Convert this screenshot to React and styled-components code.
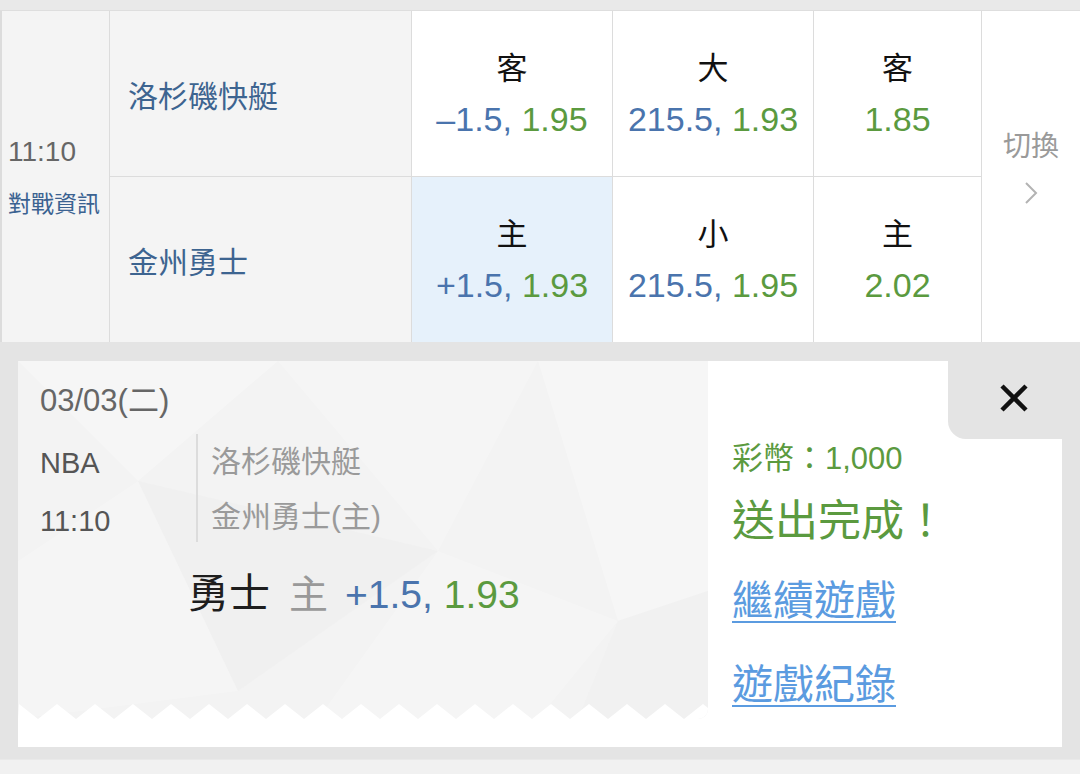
import React from "react";
import styled, { createGlobalStyle } from "styled-components";

const FONT = `"Liberation Sans", "Noto Sans CJK TC", sans-serif`;

const BLUE = "#4a74ad";
const GREEN = "#5b9a3f";

const rows = [
  {
    team: "洛杉磯快艇",
    cells: [
      { label: "客", line: "-1.5", odds: "1.95" },
      { label: "大", line: "215.5", odds: "1.93" },
      { label: "客", odds: "1.85" },
    ],
  },
  {
    team: "金州勇士",
    cells: [
      { label: "主", line: "+1.5", odds: "1.93", picked: true },
      { label: "小", line: "215.5", odds: "1.95" },
      { label: "主", odds: "2.02" },
    ],
  },
];

export default function App() {
  const teeth = [];
  for (let x = 1; x < 700; x += 38) {
    teeth.push(`L${x},0 L${x + 19},15`);
  }

  return (
    <Page>
      <GlobalStyle />
      <TopBand />
      <Table>
        <TimeCell>
          <Time>11:10</Time>
          <InfoLink>對戰資訊</InfoLink>
        </TimeCell>
        {rows.map((r, ri) => (
          <React.Fragment key={ri}>
            <TeamCell $row={ri + 1}>{r.team}</TeamCell>
            {r.cells.map((c, ci) => (
              <OddsCell key={ci} $row={ri + 1} $col={ci + 3} $picked={c.picked}>
                <OddsLabel>{c.label}</OddsLabel>
                <OddsValue>
                  {c.line && <Line>{c.line.replace("-", "\u2013")}, </Line>}
                  <Odds>{c.odds}</Odds>
                </OddsValue>
              </OddsCell>
            ))}
          </React.Fragment>
        ))}
        <SwitchCell>
          <SwitchText>切換</SwitchText>
          <svg width="14" height="24" viewBox="0 0 14 24">
            <polyline points="2,2 12,12 2,22" fill="none" stroke="#b3b3b3" strokeWidth="2" />
          </svg>
        </SwitchCell>
      </Table>

      <Section>
        <Card>
          <Ticket>
            <Texture viewBox="0 0 690 358" preserveAspectRatio="none">
              <polygon points="0,0 260,0 120,120" fill="#ffffff" opacity="0.3" />
              <polygon points="260,0 520,0 420,190" fill="#ffffff" opacity="0.22" />
              <polygon points="120,120 420,190 220,330" fill="#ececec" opacity="0.3" />
              <polygon points="520,0 690,0 690,230 600,260" fill="#ffffff" opacity="0.28" />
              <polygon points="420,190 600,260 520,358 300,358" fill="#ffffff" opacity="0.22" />
              <polygon points="0,200 120,120 220,330 0,358" fill="#ffffff" opacity="0.2" />
              <polygon points="600,260 690,230 690,358 560,358" fill="#ededed" opacity="0.35" />
            </Texture>
            <TicketBody>
              <DateText>03/03(二)</DateText>
              <InfoRow>
                <Meta>
                  <span>NBA</span>
                  <span>11:10</span>
                </Meta>
                <Teams>
                  <span>洛杉磯快艇</span>
                  <span>金州勇士(主)</span>
                </Teams>
              </InfoRow>
              <Pick>
                <PickTeam>勇士</PickTeam>
                <PickSide>主</PickSide>
                <Line>+1.5, </Line>
                <Odds>1.93</Odds>
              </Pick>
            </TicketBody>
            <Zigzag viewBox="0 0 690 15" preserveAspectRatio="none">
              <path d={`M0,15 ${teeth.join(" ")} L690,15 Z`} fill="#ffffff" />
            </Zigzag>
          </Ticket>

          <Result>
            <CloseTab aria-label="close">
              <svg width="30" height="30" viewBox="0 0 30 30">
                <path d="M3 3 L27 27 M27 3 L3 27" stroke="#111" strokeWidth="4.5" />
              </svg>
            </CloseTab>
            <ResultBody>
              <Coins>彩幣：1,000</Coins>
              <Done>送出完成！</Done>
              <ActionLink href="#">繼續遊戲</ActionLink>
              <ActionLink href="#">遊戲紀錄</ActionLink>
            </ResultBody>
          </Result>
        </Card>
      </Section>
      <BottomStrip />
    </Page>
  );
}

const GlobalStyle = createGlobalStyle`
  html, body {
    margin: 0;
    padding: 0;
    background: #e4e4e4;
    font-family: ${FONT};
  }
  * { box-sizing: border-box; }
`;

const Page = styled.div`
  width: 1080px;
  height: 774px;
  overflow: hidden;
  background: #e4e4e4;
  display: flex;
  flex-direction: column;
`;

const TopBand = styled.div`
  height: 11px;
  background: #e9e9e9;
  border-bottom: 1px solid #dedede;
`;

const Table = styled.div`
  display: grid;
  grid-template-columns: 107px 301px 200px 200px 167px 1fr;
  grid-template-rows: 165px 165px;
  gap: 1px;
  padding-left: 2px;
  background: #dcdcdc;
`;

const TimeCell = styled.div`
  grid-column: 1;
  grid-row: 1 / span 2;
  background: #f4f4f4;
  display: flex;
  flex-direction: column;
  justify-content: center;
  padding-left: 6px;
`;

const Time = styled.div`
  font-size: 28px;
  line-height: 36px;
  color: #666;
  margin-bottom: 18px;
`;

const InfoLink = styled.div`
  font-size: 23px;
  line-height: 32px;
  color: #3b6291;
`;

const TeamCell = styled.div`
  grid-column: 2;
  grid-row: ${(p) => p.$row};
  background: #f4f4f4;
  display: flex;
  align-items: center;
  padding-left: 18px;
  font-size: 30px;
  color: #3d6490;
`;

const OddsCell = styled.div`
  grid-column: ${(p) => p.$col};
  grid-row: ${(p) => p.$row};
  background: ${(p) => (p.$picked ? "#e6f1fb" : "#ffffff")};
  display: flex;
  flex-direction: column;
  align-items: center;
  justify-content: center;
`;

const OddsLabel = styled.div`
  font-size: 31px;
  line-height: 50px;
  color: #111;
`;

const OddsValue = styled.div`
  font-size: 34px;
  line-height: 50px;
  white-space: nowrap;
`;

const Line = styled.span`
  color: ${BLUE};
`;

const Odds = styled.span`
  color: ${GREEN};
`;

const SwitchCell = styled.div`
  grid-column: 6;
  grid-row: 1 / span 2;
  background: #ffffff;
  display: flex;
  flex-direction: column;
  align-items: center;
  justify-content: center;
  gap: 14px;
  padding-bottom: 22px;
`;

const SwitchText = styled.div`
  font-size: 28px;
  line-height: 40px;
  color: #9a9a9a;
`;

const Section = styled.div`
  padding: 19px 18px 12px 18px;
`;

const Card = styled.div`
  height: 386px;
  background: #ffffff;
  display: flex;
  align-items: flex-start;
`;

const Ticket = styled.div`
  position: relative;
  width: 690px;
  height: 358px;
  background: #f3f3f3;
  border-bottom-right-radius: 10px;
  overflow: hidden;
`;

const Texture = styled.svg`
  position: absolute;
  inset: 0;
  width: 100%;
  height: 100%;
`;

const Zigzag = styled.svg`
  position: absolute;
  left: 0;
  bottom: 0;
  width: 100%;
  height: 15px;
`;

const TicketBody = styled.div`
  position: relative;
  padding: 20px 0 0 22px;
`;

const DateText = styled.div`
  font-size: 31px;
  line-height: 40px;
  color: #666;
`;

const InfoRow = styled.div`
  display: flex;
  margin-top: 13px;
`;

const Meta = styled.div`
  width: 156px;
  display: flex;
  flex-direction: column;
  font-size: 29px;
  line-height: 58px;
  color: #555;
`;

const Teams = styled.div`
  display: flex;
  flex-direction: column;
  border-left: 2px solid #dcdcdc;
  padding-left: 13px;
  height: 108px;
  font-size: 30px;
  line-height: 55px;
  color: #9a9a9a;
`;

const Pick = styled.div`
  margin-top: 19px;
  padding-left: 148px;
  font-size: 39px;
  line-height: 50px;
  white-space: nowrap;
`;

const PickTeam = styled.span`
  font-size: 41px;
  color: #1e1e1e;
  margin-right: 19px;
`;

const PickSide = styled.span`
  color: #999;
  margin-right: 17px;
`;

const Result = styled.div`
  flex: 1;
  display: flex;
  flex-direction: column;
`;

const CloseTab = styled.div`
  align-self: flex-end;
  width: 132px;
  height: 78px;
  margin-right: -18px;
  background: #e4e4e4;
  border-bottom-left-radius: 18px;
  display: flex;
  align-items: center;
  justify-content: center;
  padding-bottom: 4px;
`;

const ResultBody = styled.div`
  padding-left: 24px;
  display: flex;
  flex-direction: column;
  align-items: flex-start;
`;

const Coins = styled.div`
  font-size: 31px;
  line-height: 40px;
  color: ${GREEN};
`;

const Done = styled.div`
  margin-top: 14px;
  font-size: 43px;
  line-height: 56px;
  color: ${GREEN};
`;

const ActionLink = styled.a`
  margin-top: 22px;
  font-size: 41px;
  line-height: 60px;
  color: #5b9be0;
  text-decoration: underline;
  text-decoration-thickness: 2px;
  text-underline-offset: 6px;
  & + & {
    margin-top: 24px;
  }
`;

const BottomStrip = styled.div`
  flex: 1;
  background: #f1f1f1;
  border-top: 1px solid #e9e9e9;
`;
